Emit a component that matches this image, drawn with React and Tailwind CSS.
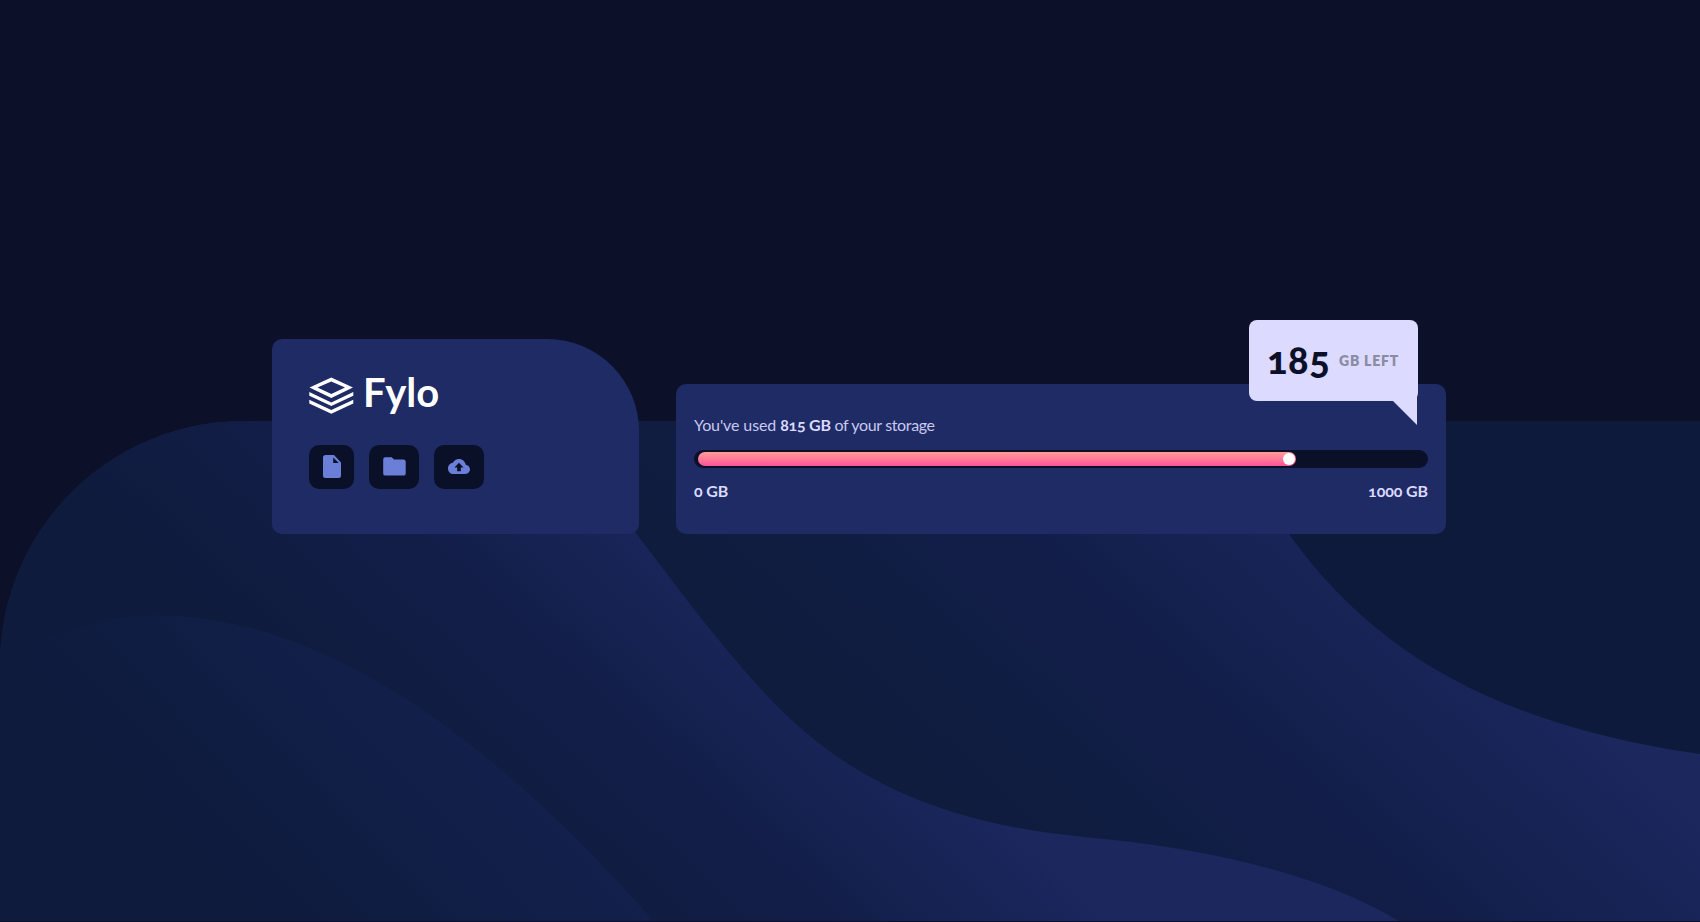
function Backdrop() {
  return (
    <svg className="absolute inset-0 h-[922px] w-[1700px]" viewBox="0 0 1700 922" fill="none" aria-hidden="true">
      <defs>
        <linearGradient id="wave-far" gradientUnits="userSpaceOnUse" x1="960" y1="790" x2="1280" y2="440">
          <stop stopColor="#0f1c3e" />
          <stop offset=".5" stopColor="#121e49" />
          <stop offset="1" stopColor="#1b275d" />
        </linearGradient>
        <linearGradient id="wave-mid" gradientUnits="userSpaceOnUse" x1="370" y1="752" x2="628" y2="474">
          <stop stopColor="#0f1b3d" />
          <stop offset=".5" stopColor="#121e48" />
          <stop offset="1" stopColor="#1b275d" />
        </linearGradient>
        <linearGradient id="wave-near" gradientUnits="userSpaceOnUse" x1="200" y1="850" x2="410" y2="651">
          <stop stopColor="#0e1b3d" />
          <stop offset="1" stopColor="#13204c" />
        </linearGradient>
        <clipPath id="hill">
          <path d="M244 421H1700V921H0V665C0 530 109 421 244 421Z" />
        </clipPath>
      </defs>
      <g clipPath="url(#hill)">
        <path d="M0 421H1700V922H0Z" fill="#0e1a3b" />
        <path d="M0 421H1180C1225 421 1250 480 1289 534C1370 648 1490 724 1700 754V922H0Z" fill="url(#wave-far)" />
        <path d="M0 421H500C560 440 600 487 635 532C677 587 712 635 759 687C850 790 960 825 1084 837C1205 848 1320 873 1400 922H0Z" fill="url(#wave-mid)" />
        <path d="M0 665C50 632 100 615.500 157 615.500C320 615.500 490 735 654 922H0Z" fill="url(#wave-near)" />
      </g>
    </svg>
  );
}

function LayersMark() {
  return (
    <svg className="h-[37px] w-[45px]" viewBox="0 0 45 37" fill="#fff" aria-hidden="true">
      <path fillRule="evenodd" d="M22.300 .5L44 10.500L22.300 21L.5 10.500ZM22.300 4.500L8.500 10.500L22.300 17L36 10.500Z" />
      <path d="M.3 15L22.300 25.400L44.300 15V18.700L22.300 29.100L.3 18.700Z" />
      <path d="M.3 22.700L22.300 33L44.300 22.700V26.400L22.300 36.800L.3 26.400Z" />
    </svg>
  );
}

function FileIcon() {
  return (
    <svg className="-mt-[1px] h-[23px] w-[18px]" viewBox="0 0 18 23" fill="#6c7fd8" aria-hidden="true">
      <path fillRule="evenodd" d="M2.500 0H11L18 7.500V20.500Q18 23 15.500 23H2.500Q0 23 0 20.500V2.500Q0 0 2.500 0ZM10.200 2.500V8H15.800Z" />
    </svg>
  );
}

function FolderIcon() {
  return (
    <svg className="-mt-[1px] h-[19px] w-[23px]" viewBox="0 0 23 19" fill="#6c7fd8" aria-hidden="true">
      <path d="M2.300 .3H8.700L11 2.600H20.500Q22.700 2.600 22.700 4.800V16.400Q22.700 18.600 20.500 18.600H2.300Q.2 18.600 .2 16.400V2.500Q.2 .3 2.300 .3Z" />
    </svg>
  );
}

function UploadIcon() {
  return (
    <svg className="-mt-[1px] h-[15px] w-[22px]" viewBox="0 4 24 16" preserveAspectRatio="none" fill="#6c7fd8" aria-hidden="true">
      <path d="M19.350 10.040C18.670 6.590 15.640 4 12 4 9.110 4 6.600 5.640 5.350 8.040 2.340 8.360 0 10.910 0 14c0 3.310 2.690 6 6 6h13c2.760 0 5-2.240 5-5 0-2.640-2.050-4.780-4.650-4.960zM14 13v4h-4v-4H7l5-5 5 5h-3z" />
    </svg>
  );
}

export default function App() {
  return (
    <main className="relative h-[922px] w-[1700px] overflow-hidden bg-[#0c1129] font-['Lato','Liberation_Sans',sans-serif] oldstyle-nums">
      <Backdrop />
      <div className="relative flex items-end gap-[37px] pt-[339px] pl-[272px]">
        <section className="h-[194.5px] w-[367px] rounded-[10px] rounded-tr-[92px] bg-[#1e2b65] px-[37px] pt-[38px]">
          <div className="flex h-[37px] items-center gap-[9px]">
            <LayersMark />
            <span className="-mt-[8px] text-[40px] leading-none font-bold text-white">Fylo</span>
          </div>
          <div className="mt-[31px] flex gap-[15px]">
            <button className="flex h-[44px] w-[45px] items-center justify-center rounded-[10px] bg-[#0b1029]"><FileIcon /></button>
            <button className="flex h-[44px] w-[50px] items-center justify-center rounded-[10px] bg-[#0b1029]"><FolderIcon /></button>
            <button className="flex h-[44px] w-[50px] items-center justify-center rounded-[10px] bg-[#0b1029]"><UploadIcon /></button>
          </div>
        </section>
        <section className="relative h-[149.5px] w-[770px] rounded-[10px] bg-[#1e2b65] px-[18px] pt-[29px] text-[16px] leading-[24px] text-[#dcdaff]">
          <p className="text-[#c9c8f0]"><span className="tracking-[-0.1px]">You've used </span><b className="font-bold tracking-[-0.25px] text-[#dcdaff]">815 GB</b><span className="tracking-[-0.35px]"> of your storage</span></p>
          <div className="mt-[13px] h-[18px] rounded-full bg-[#0b1029] px-[4px] py-[2px]">
            <div className="flex h-[14px] w-[598px] items-center justify-end rounded-full bg-linear-to-b from-[#ff9c98] to-[#ff4f98] pr-[1px]">
              <span className="size-[12px] rounded-full bg-white" />
            </div>
          </div>
          <div className="mt-[11px] flex justify-between font-bold tracking-[-0.1px]"><span>0 GB</span><span>1000 GB</span></div>
          <div className="absolute top-[-64px] right-[28px] flex h-[81px] w-[169px] items-center rounded-[8px] bg-[#dcdaff] pl-[18px]">
            <span className="-mt-[4px] w-[72px] text-[38px] leading-none font-black tracking-[0.6px] text-[#0b1029]">185</span>
            <span className="text-[14px] leading-none font-extrabold tracking-[0.8px] text-[#8b8ba3]">GB LEFT</span>
            <svg className="absolute top-[75px] right-[1px] h-[30px] w-[30px]" viewBox="0 0 30 30" fill="#dcdaff" aria-hidden="true"><path d="M0 0H30V30Z" /></svg>
          </div>
        </section>
      </div>
    </main>
  );
}
